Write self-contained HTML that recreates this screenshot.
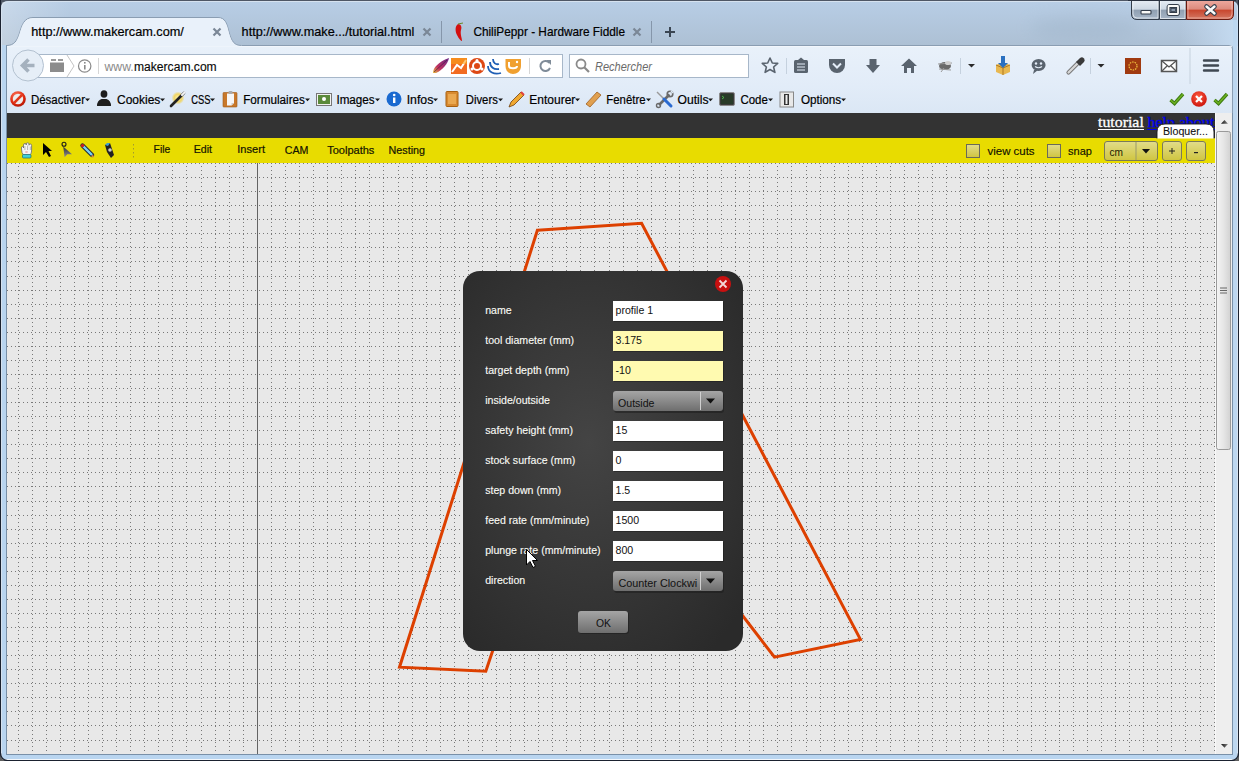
<!DOCTYPE html>
<html><head><meta charset="utf-8"><title>makercam</title>
<style>html,body{margin:0;padding:0;width:1239px;height:761px;overflow:hidden;background:#1b2230;font-family:"Liberation Sans",sans-serif} svg{display:block}</style>
</head><body><svg width="1239" height="761" viewBox="0 0 1239 761" shape-rendering="auto"><defs><linearGradient id="gTitle" gradientUnits="userSpaceOnUse" x1="0" y1="0" x2="0" y2="46">
<stop offset="0" stop-color="#b8cee6"/><stop offset="1" stop-color="#adc0d4"/></linearGradient><linearGradient id="gNav" x1="0" y1="0" x2="0" y2="1">
<stop offset="0" stop-color="#e9f1fa"/><stop offset="0.6" stop-color="#e2ecf8"/><stop offset="1" stop-color="#dbe7f5"/></linearGradient><radialGradient id="gDlg" cx="0.45" cy="0.45" r="0.7">
<stop offset="0" stop-color="#444"/><stop offset="1" stop-color="#2a2a2a"/></radialGradient><linearGradient id="gCombo" x1="0" y1="0" x2="0" y2="1">
<stop offset="0" stop-color="#a5a5a5"/><stop offset="0.5" stop-color="#8a8a8a"/><stop offset="1" stop-color="#6e6e6e"/></linearGradient><linearGradient id="gYBtn" x1="0" y1="0" x2="0" y2="1">
<stop offset="0" stop-color="#e2dc8a"/><stop offset="1" stop-color="#cfc540"/></linearGradient><linearGradient id="gScroll" x1="0" y1="0" x2="1" y2="0">
<stop offset="0" stop-color="#f4f4f4"/><stop offset="0.5" stop-color="#e6e6e6"/><stop offset="1" stop-color="#d2d2d2"/></linearGradient><linearGradient id="gGlassL" x1="0" y1="0" x2="1" y2="0"><stop offset="0" stop-color="#fff" stop-opacity="0.25"/><stop offset="1" stop-color="#fff" stop-opacity="0"/></linearGradient><linearGradient id="gGlassR" x1="0" y1="0" x2="1" y2="0"><stop offset="0" stop-color="#c6dcf2" stop-opacity="0"/><stop offset="1" stop-color="#c6dcf2" stop-opacity="0.95"/></linearGradient><filter id="blur8" x="-50%" y="-50%" width="200%" height="200%"><feGaussianBlur stdDeviation="8"/></filter><linearGradient id="gMin" x1="0" y1="0" x2="0" y2="1">
<stop offset="0" stop-color="#e6edf4"/><stop offset="0.48" stop-color="#cdd8e3"/><stop offset="0.5" stop-color="#8f9fb1"/><stop offset="1" stop-color="#a7b6c7"/></linearGradient><linearGradient id="gCls" x1="0" y1="0" x2="0" y2="1">
<stop offset="0" stop-color="#eeaaa0"/><stop offset="0.48" stop-color="#dc8a7c"/><stop offset="0.5" stop-color="#c8442c"/><stop offset="1" stop-color="#d47a66"/></linearGradient><linearGradient id="gFeather" x1="0" y1="1" x2="1" y2="0"><stop offset="0" stop-color="#e8c040"/><stop offset="0.35" stop-color="#c03060"/><stop offset="1" stop-color="#6a2a8a"/></linearGradient><radialGradient id="gStop" cx="0.4" cy="0.3" r="0.8"><stop offset="0" stop-color="#ff7a60"/><stop offset="0.6" stop-color="#e02a10"/><stop offset="1" stop-color="#a01000"/></radialGradient><radialGradient id="gSpark" cx="0.5" cy="0.5" r="0.5"><stop offset="0" stop-color="#fff8c0"/><stop offset="0.6" stop-color="#f4d040" stop-opacity="0.8"/><stop offset="1" stop-color="#f4d040" stop-opacity="0"/></radialGradient><radialGradient id="gRedX" cx="0.45" cy="0.35" r="0.7"><stop offset="0" stop-color="#ff5a40"/><stop offset="1" stop-color="#c81008"/></radialGradient><linearGradient id="gLasso" x1="0" y1="0" x2="0" y2="1"><stop offset="0" stop-color="#303030"/><stop offset="1" stop-color="#909090"/></linearGradient><linearGradient id="gArr" x1="0" y1="0" x2="1" y2="0"><stop offset="0" stop-color="#111"/><stop offset="1" stop-color="#888"/></linearGradient></defs><rect x="0" y="0" width="1239" height="761" fill="#4e5765"/><path d="M1 761 V8 Q1 1 8 1 H1231 Q1238 1 1238 8 V761 Z" fill="url(#gTitle)"/><path d="M1.5 761 V9 Q1.5 1.5 9 1.5 H1230 Q1237.5 1.5 1237.5 9 V761" fill="none" stroke="#d6e2ef" stroke-width="1"/><rect x="2" y="2" width="70" height="43" fill="url(#gGlassL)"/><rect x="1180" y="20" width="58" height="26" fill="url(#gGlassR)"/><rect x="2" y="45" width="4" height="710" fill="#b9d5f0"/><rect x="6" y="45" width="1" height="710" fill="#7990a8"/><rect x="1233" y="20" width="4" height="735" fill="#bdd7f0"/><rect x="1232" y="113" width="1" height="642" fill="#7990a8"/><rect x="2" y="755" width="1235" height="4" fill="#b9d5f0"/><rect x="6" y="754" width="1227" height="1" fill="#7990a8"/><rect x="1" y="759" width="1237" height="1" fill="#f2f6fb"/><rect x="0" y="760" width="1239" height="1" fill="#1b2230"/><rect x="0" y="0" width="1" height="761" fill="#1b2230"/><rect x="1238" y="0" width="1" height="761" fill="#1b2230"/><path d="M0 753 Q0.5 760.5 7 761 H0 Z" fill="#606060"/><path d="M0.5 753 Q1 760 7.5 760.5" fill="none" stroke="#1b2230" stroke-width="1.2"/><path d="M1239 753 Q1238.5 760.5 1232 761 H1239 Z" fill="#606060"/><path d="M1238.5 753 Q1238 760 1231.5 760.5" fill="none" stroke="#1b2230" stroke-width="1.2"/><ellipse cx="1085" cy="28" rx="55" ry="12" fill="#9aafc4" opacity="0.35" filter="url(#blur8)"/><path d="M1131.5 0 V14 Q1131.5 19.5 1137 19.5 H1159 V0 Z" fill="url(#gMin)" stroke="#333d4a" stroke-width="1"/><path d="M1159.5 0 V19.5 H1186 V0 Z" fill="url(#gMin)" stroke="#333d4a" stroke-width="1"/><path d="M1133 0 V14 Q1133 18 1137 18 H1158 V0" fill="none" stroke="#f4f7fa" stroke-width="1" opacity="0.7"/><rect x="1160.5" y="0.5" width="24.5" height="18" fill="none" stroke="#f4f7fa" stroke-width="1" opacity="0.7"/><path d="M1186.5 0 V19.5 H1228 Q1233.5 19.5 1233.5 14 V0 Z" fill="url(#gCls)" stroke="#6a1a10" stroke-width="1"/><path d="M1188 1 V18 H1228 Q1232 18 1232 14 V1" fill="none" stroke="#f6c8c0" stroke-width="1" opacity="0.6"/><rect x="1141" y="10.5" width="10" height="3.5" rx="0.8" fill="#f8f8f6" stroke="#333d4a" stroke-width="1.1"/><rect x="1168.5" y="6" width="9.5" height="8" rx="1" fill="#8a9aad" stroke="#333d4a" stroke-width="3.8"/><rect x="1168.5" y="6" width="9.5" height="8" rx="0.5" fill="none" stroke="#fafaf8" stroke-width="1.8"/><rect x="1171" y="8.5" width="4.5" height="3" fill="#8a9aad" stroke="#333d4a" stroke-width="0.8"/><path d="M1206.5 6.5 L1214.5 13.5 M1214.5 6.5 L1206.5 13.5" stroke="#333d4a" stroke-width="4.6" stroke-linecap="round"/><path d="M1206.5 6.5 L1214.5 13.5 M1214.5 6.5 L1206.5 13.5" stroke="#fafafa" stroke-width="2.4" stroke-linecap="round"/><rect x="1128" y="0" width="108" height="1" fill="#2a3240"/><path d="M6.5 45.5 C14 45.5 17 41 19.5 33 C22 25 24 17.5 33 17.5 L218 17.5 C225.5 17.5 227 24 229 32 C231.5 41 234 45.5 241.5 45.5 Z" fill="#e9f1fa"/><path d="M7 45 H1229 Q1232 45 1232 48 V113 H7 Z" fill="url(#gNav)"/><path d="M6.5 45.5 C14 45.5 17 41 19.5 33 C22 25 24 17.5 33 17.5 L218 17.5 C225.5 17.5 227 24 229 32 C231.5 41 234 45.5 241.5 45.5 H1229 Q1232.5 45.5 1232.5 49 V113" fill="none" stroke="#8a9db2" stroke-width="1"/><rect x="7" y="46" width="1225" height="1" fill="#f4f8fd" opacity="0.8"/><path d="M8 45.5 C14 45.5 17 41 19.5 33 C22 25 24 17.5 33 17.5 L218 17.5 C225.5 17.5 227 24 229 32 C231.5 41 234 45.5 240 45.5 Z" fill="#e9f1fa" transform="translate(0,1)"/><text x="31.3" y="36.2" font-family="Liberation Sans" font-size="12.2" fill="#000" textLength="152.6" lengthAdjust="spacingAndGlyphs"  stroke="#000" stroke-width="0.2">http://www.makercam.com/</text><text x="241.6" y="36.2" font-family="Liberation Sans" font-size="12.2" fill="#000" textLength="172.8" lengthAdjust="spacingAndGlyphs"  stroke="#000" stroke-width="0.2">http://www.make.../tutorial.html</text><text x="473.4" y="36.2" font-family="Liberation Sans" font-size="12.2" fill="#000" textLength="151.6" lengthAdjust="spacingAndGlyphs"  stroke="#000" stroke-width="0.2">ChiliPeppr - Hardware Fiddle</text><path d="M213.5 28.5 L220.5 35.5 M220.5 28.5 L213.5 35.5" stroke="#7a8796" stroke-width="2.2"/><path d="M423.5 28.5 L430.5 35.5 M430.5 28.5 L423.5 35.5" stroke="#7a8796" stroke-width="2.2"/><path d="M633.5 28.5 L640.5 35.5 M640.5 28.5 L633.5 35.5" stroke="#7a8796" stroke-width="2.2"/><rect x="441" y="21" width="1" height="22" fill="#8596aa"/><rect x="651" y="21" width="1" height="22" fill="#8596aa"/><path d="M665 32 H675 M670 27 V37" stroke="#3a4552" stroke-width="2"/><path d="M458 24 C455 26 455 31 457 35 C459 39 461 41 462 41 C462 38 460 34 461 30 C462 27 461 24 458 24 Z" fill="#d41010"/><path d="M458 24 L463 23" stroke="#6a8a2a" stroke-width="1"/><rect x="38.5" y="54.5" width="524" height="23" fill="#fff" stroke="#a7b7c9"/><circle cx="28" cy="65.5" r="15.5" fill="#e6eef7" stroke="#b3c1d0"/><path d="M23 65.5 H34.5 M28.5 59.5 L22.5 65.5 L28.5 71.5" stroke="#a5b1be" stroke-width="3.6" fill="none" stroke-linejoin="miter"/><rect x="50" y="62.5" width="14" height="9.5" fill="#8c8c8c"/><rect x="51" y="59" width="5" height="2" fill="#9a9a9a"/><rect x="58" y="59" width="5" height="2" fill="#9a9a9a"/><path d="M67 55 L74 66 L67 77" fill="none" stroke="#c4c4c4"/><circle cx="84.7" cy="66" r="6.2" fill="none" stroke="#8a8a8a" stroke-width="1.2"/><rect x="84" y="65" width="1.6" height="4.5" fill="#8a8a8a"/><rect x="84" y="62" width="1.6" height="1.6" fill="#8a8a8a"/><rect x="98" y="58" width="1" height="16" fill="#d6d6d6"/><text x="104.5" y="71" font-family="Liberation Sans" font-size="12.5" fill="#8a8a8a" textLength="29.2" lengthAdjust="spacingAndGlyphs" >www.</text><text x="134" y="71" font-family="Liberation Sans" font-size="12.5" fill="#0a0a0a" textLength="82.7" lengthAdjust="spacingAndGlyphs"  stroke="#0a0a0a" stroke-width="0.15">makercam.com</text><path d="M433 73 C433 68 438 62 449 58 C448 63 443 70 436 73 Z" fill="url(#gFeather)"/><path d="M434 72 L447 60" stroke="#3a1a3a" stroke-width="0.6"/><rect x="451" y="58" width="16" height="16" fill="#f26b21"/><path d="M452 72 L457 65 L461 68 L466 60" stroke="#fff" stroke-width="2" fill="none"/><rect x="451" y="58" width="16" height="6" fill="#f9a21b" opacity="0.6"/><circle cx="477" cy="66" r="8" fill="#dd4814"/><circle cx="477" cy="66" r="4" fill="none" stroke="#fff" stroke-width="2"/><circle cx="477" cy="60.5" r="1.5" fill="#fff"/><circle cx="472" cy="69" r="1.5" fill="#fff"/><circle cx="482" cy="69" r="1.5" fill="#fff"/><path d="M488 66 C488 72 494 75 501 73 M490 62 C490 67 494 70 499 69 M493 59 C493 63 496 65 499 64" stroke="#1f5fb5" stroke-width="1.8" fill="none"/><path d="M505.5 59 H521 V66 C521 71 517 74 513 74 C509 74 505.5 71 505.5 66 Z" fill="#f0a030"/><path d="M509 62 V66 C509 69 517 69 517 66" stroke="#fff" stroke-width="2" fill="none"/><circle cx="517" cy="62" r="1.2" fill="#fff"/><rect x="529" y="58" width="1" height="16" fill="#d6d6d6"/><path d="M549.5 63 A5 5 0 1 0 550 68" fill="none" stroke="#7f8b98" stroke-width="2"/><path d="M546 60 L551 60 L551 65 Z" fill="#7f8b98"/><rect x="569.5" y="54.5" width="179" height="23" fill="#fff" stroke="#a7b7c9"/><circle cx="581" cy="64" r="4.5" fill="none" stroke="#8a8a8a" stroke-width="1.8"/><path d="M584 67 L589 72" stroke="#8a8a8a" stroke-width="2.2"/><text x="595" y="71" font-family="Liberation Sans" font-size="12.5" fill="#6a6a6a" textLength="57" lengthAdjust="spacingAndGlyphs" font-style="italic">Rechercher</text><path d="M770 58 L772.3 63 L777.7 63.4 L773.6 67 L774.9 72.4 L770 69.5 L765.1 72.4 L766.4 67 L762.3 63.4 L767.7 63 Z" fill="none" stroke="#59636e" stroke-width="1.6" stroke-linejoin="round"/><rect x="786" y="58" width="1" height="16" fill="#c5d1de"/><rect x="794" y="60" width="14" height="13" rx="1.5" fill="#59636e"/><path d="M798 60 L801 57.5 L804 60 Z" fill="#59636e"/><path d="M797 64 H805 M797 67 H805 M797 70 H805" stroke="#e4edf8" stroke-width="1"/><path d="M829 59 H845 V65 A8 8 0 0 1 829 65 Z" fill="#59636e"/><path d="M833 63.5 L837 67.5 L841 63.5" stroke="#e4edf8" stroke-width="2" fill="none"/><path d="M869.5 59 H876.5 V65 H880 L873 73 L866 65 H869.5 Z" fill="#59636e"/><path d="M909 58.5 L917 66 H914 V73 H911 V68 H907 V73 H904 V66 H901 Z" fill="#59636e"/><ellipse cx="945" cy="66" rx="6" ry="4" fill="#6a6a6a"/><path d="M938 64 L952 63 M939 69 L951 70 M941 72 L944 68" stroke="#999" stroke-width="1"/><ellipse cx="948" cy="63" rx="3" ry="2" fill="#d0d0d0"/><rect x="960" y="58" width="1" height="16" fill="#c5d1de"/><path d="M968 64 H975 L971.5 67.5 Z" fill="#2a2a2a"/><path d="M996 65 L1003 62 L1010 65 L1010 72 L1003 75 L996 72 Z" fill="#e8b850"/><path d="M996 65 L1003 68 L1010 65 M1003 68 V75" stroke="#b07820" stroke-width="1" fill="none"/><path d="M1001 56 H1005 V63 H1008 L1003 68 L998 63 H1001 Z" fill="#2a70c0"/><ellipse cx="1038.6" cy="65" rx="7" ry="6" fill="#59636e"/><path d="M1034 70 L1033 74 L1038 70 Z" fill="#59636e"/><circle cx="1036" cy="63.5" r="1.2" fill="#e4edf8"/><circle cx="1041" cy="63.5" r="1.2" fill="#e4edf8"/><path d="M1035 66.5 Q1038.5 69 1042 66.5" stroke="#e4edf8" stroke-width="1.2" fill="none"/><path d="M1068.5 72.5 L1078 63" stroke="#777" stroke-width="4.2" stroke-linecap="round"/><path d="M1068.5 72.5 L1078 63" stroke="#d8d8d8" stroke-width="2.2" stroke-linecap="round"/><path d="M1076 62 L1080 58 Q1082 56.5 1083.5 58 L1084 58.5 Q1085.5 60 1084 62 L1080 66 Z" fill="#3a3a3a"/><rect x="1090" y="58" width="1" height="16" fill="#c5d1de"/><path d="M1097.5 64 H1104.5 L1101 67.5 Z" fill="#2a2a2a"/><rect x="1125" y="58" width="16" height="16" fill="#a03a10"/><circle cx="1133" cy="66" r="4" fill="none" stroke="#f0c040" stroke-width="1.2" stroke-dasharray="1.5 1"/><rect x="1161.5" y="60.5" width="15" height="11" fill="#fff" stroke="#555" stroke-width="1.5"/><path d="M1162 61 L1169 67 L1176 61 M1162 71 L1167 66 M1176 71 L1171 66" stroke="#555" stroke-width="1.3" fill="none"/><rect x="1189.5" y="48" width="1" height="36" fill="#c5d1de"/><path d="M1204 60.5 H1218 M1204 65.5 H1218 M1204 70.5 H1218" stroke="#3f4852" stroke-width="2.4" stroke-linecap="round"/><text x="31" y="103.8" font-family="Liberation Sans" font-size="12" fill="#000" textLength="54" lengthAdjust="spacingAndGlyphs"  stroke="#000" stroke-width="0.2">Désactiver</text><path d="M85 98.5 H90 L87.5 101.3 Z" fill="#1a1a1a"/><text x="117" y="103.8" font-family="Liberation Sans" font-size="12" fill="#000" textLength="43.3" lengthAdjust="spacingAndGlyphs"  stroke="#000" stroke-width="0.2">Cookies</text><path d="M160 98.5 H165 L162.5 101.3 Z" fill="#1a1a1a"/><text x="191.2" y="103.8" font-family="Liberation Sans" font-size="12" fill="#000" textLength="19.3" lengthAdjust="spacingAndGlyphs"  stroke="#000" stroke-width="0.2">CSS</text><path d="M210 98.5 H215 L212.5 101.3 Z" fill="#1a1a1a"/><text x="243.2" y="103.8" font-family="Liberation Sans" font-size="12" fill="#000" textLength="61.8" lengthAdjust="spacingAndGlyphs"  stroke="#000" stroke-width="0.2">Formulaires</text><path d="M305 98.5 H310 L307.5 101.3 Z" fill="#1a1a1a"/><text x="336.4" y="103.8" font-family="Liberation Sans" font-size="12" fill="#000" textLength="38.3" lengthAdjust="spacingAndGlyphs"  stroke="#000" stroke-width="0.2">Images</text><path d="M375 98.5 H380 L377.5 101.3 Z" fill="#1a1a1a"/><text x="406.7" y="103.8" font-family="Liberation Sans" font-size="12" fill="#000" textLength="26.6" lengthAdjust="spacingAndGlyphs"  stroke="#000" stroke-width="0.2">Infos</text><path d="M433 98.5 H438 L435.5 101.3 Z" fill="#1a1a1a"/><text x="465.8" y="103.8" font-family="Liberation Sans" font-size="12" fill="#000" textLength="32" lengthAdjust="spacingAndGlyphs"  stroke="#000" stroke-width="0.2">Divers</text><path d="M498 98.5 H503 L500.5 101.3 Z" fill="#1a1a1a"/><text x="529.3" y="103.8" font-family="Liberation Sans" font-size="12" fill="#000" textLength="46" lengthAdjust="spacingAndGlyphs"  stroke="#000" stroke-width="0.2">Entourer</text><path d="M575 98.5 H580 L577.5 101.3 Z" fill="#1a1a1a"/><text x="606.3" y="103.8" font-family="Liberation Sans" font-size="12" fill="#000" textLength="39.2" lengthAdjust="spacingAndGlyphs"  stroke="#000" stroke-width="0.2">Fenêtre</text><path d="M646 98.5 H651 L648.5 101.3 Z" fill="#1a1a1a"/><text x="677.5" y="103.8" font-family="Liberation Sans" font-size="12" fill="#000" textLength="31" lengthAdjust="spacingAndGlyphs"  stroke="#000" stroke-width="0.2">Outils</text><path d="M708 98.5 H713 L710.5 101.3 Z" fill="#1a1a1a"/><text x="740.4" y="103.8" font-family="Liberation Sans" font-size="12" fill="#000" textLength="27.4" lengthAdjust="spacingAndGlyphs"  stroke="#000" stroke-width="0.2">Code</text><path d="M768 98.5 H773 L770.5 101.3 Z" fill="#1a1a1a"/><text x="800.9" y="103.8" font-family="Liberation Sans" font-size="12" fill="#000" textLength="40.3" lengthAdjust="spacingAndGlyphs"  stroke="#000" stroke-width="0.2">Options</text><path d="M841 98.5 H846 L843.5 101.3 Z" fill="#1a1a1a"/><circle cx="18" cy="99" r="7.8" fill="url(#gStop)"/><circle cx="18" cy="99" r="5.2" fill="#ededed"/><path d="M14.2 102.8 L21.8 95.2" stroke="#e0361a" stroke-width="2.6"/><ellipse cx="104" cy="94" rx="3.4" ry="3.8" fill="#1e1e1e"/><path d="M97 106 Q97 100.5 101.5 99 H106.5 Q111 100.5 111 106 Z" fill="#1e1e1e"/><circle cx="178" cy="98" r="6.5" fill="url(#gSpark)"/><path d="M171 106 L184 93" stroke="#222" stroke-width="2.6" stroke-linecap="round"/><path d="M182 95 L184.5 92.5" stroke="#f4f4f4" stroke-width="2.2" stroke-linecap="round"/><rect x="223" y="92.5" width="14" height="14.5" rx="0.8" fill="#c8782a" stroke="#a05a18" stroke-width="0.6"/><path d="M227 93.5 H234 V103 L231.5 105.5 H227 Z" fill="#f6f6f6"/><path d="M231.5 105.5 V103 H234 Z" fill="#ccc"/><rect x="228.5" y="91" width="4" height="3" rx="1" fill="#aaa"/><rect x="316.5" y="93.5" width="15" height="12" fill="#f2f2f2" stroke="#777"/><rect x="318" y="95" width="12" height="9" fill="#5a8a3a"/><circle cx="324" cy="99" r="2" fill="#fff"/><circle cx="394" cy="99" r="7.5" fill="#1a6ad0"/><rect x="393" y="97.5" width="2.4" height="5.5" fill="#fff"/><circle cx="394.2" cy="95" r="1.3" fill="#fff"/><rect x="446" y="91.5" width="12" height="15" rx="1" fill="#d88a30" stroke="#a86010"/><rect x="448" y="94" width="8" height="10" fill="#eaa850"/><path d="M509 107 L511 102 L521 92 L524 95 L514 105 Z" fill="#f0a830" stroke="#704010" stroke-width="0.8"/><path d="M521 92 L524 95" stroke="#e04040" stroke-width="2"/><path d="M586 104 L597 92 L601 95 L590 107 Z" fill="#e0a050" stroke="#a06020" stroke-width="0.8"/><path d="M669.5 94.5 L659 105" stroke="#6a6a6a" stroke-width="2.6"/><circle cx="670" cy="94" r="2.8" fill="none" stroke="#6a6a6a" stroke-width="1.6"/><circle cx="658.5" cy="105.5" r="2" fill="none" stroke="#6a6a6a" stroke-width="1.4"/><path d="M671 91 L673 93" stroke="#dde8f4" stroke-width="1.6"/><path d="M657 92 L664 99" stroke="#9a9a9a" stroke-width="1.4"/><path d="M664 99 L671 106" stroke="#2a6ad0" stroke-width="3" stroke-linecap="round"/><rect x="719.5" y="92.5" width="15" height="13" rx="1.5" fill="#3a3a3a" stroke="#8a8a8a"/><rect x="721" y="94" width="12" height="10" fill="#283a28"/><path d="M722 96 L724 97.5 L722 99" stroke="#5c5" stroke-width="0.8" fill="none"/><rect x="780" y="92" width="13.5" height="15" fill="#e8e8e8" stroke="#888"/><rect x="784" y="94" width="5" height="11" fill="#333"/><rect x="785.5" y="95" width="2" height="9" fill="#eee"/><path d="M1170.5 100 L1174.5 103.5 L1183 94" stroke="#3c7a10" stroke-width="3.4" fill="none"/><path d="M1170.5 100 L1174.5 103.5 L1183 94" stroke="#6cb020" stroke-width="1.6" fill="none"/><circle cx="1199" cy="99" r="7.8" fill="url(#gRedX)"/><path d="M1196 96 L1202 102 M1202 96 L1196 102" stroke="#fff" stroke-width="2.2"/><path d="M1214.5 100 L1218.5 103.5 L1227 94" stroke="#3c7a10" stroke-width="3.4" fill="none"/><path d="M1214.5 100 L1218.5 103.5 L1227 94" stroke="#6cb020" stroke-width="1.6" fill="none"/><rect x="7" y="113" width="1208" height="25" fill="#333"/><rect x="7" y="138" width="1208" height="25" fill="#e8dc00"/><rect x="7" y="163" width="1208" height="591" fill="#e8e8e8"/><path d="M7 163.5 H1215 M7 177.5 H1215 M7 191.5 H1215 M7 205.5 H1215 M7 219.5 H1215 M7 233.5 H1215 M7 247.5 H1215 M7 261.5 H1215 M7 276.5 H1215 M7 290.5 H1215 M7 304.5 H1215 M7 318.5 H1215 M7 332.5 H1215 M7 346.5 H1215 M7 360.5 H1215 M7 374.5 H1215 M7 388.5 H1215 M7 402.5 H1215 M7 416.5 H1215 M7 430.5 H1215 M7 444.5 H1215 M7 458.5 H1215 M7 472.5 H1215 M7 486.5 H1215 M7 501.5 H1215 M7 515.5 H1215 M7 529.5 H1215 M7 543.5 H1215 M7 557.5 H1215 M7 571.5 H1215 M7 585.5 H1215 M7 599.5 H1215 M7 613.5 H1215 M7 627.5 H1215 M7 641.5 H1215 M7 655.5 H1215 M7 669.5 H1215 M7 683.5 H1215 M7 697.5 H1215 M7 711.5 H1215 M7 725.5 H1215 M7 740.5 H1215" stroke="#787878" stroke-width="1" stroke-dasharray="1 3" shape-rendering="crispEdges"/><path d="M18.5 166 V754 M32.5 166 V754 M46.5 166 V754 M60.5 166 V754 M74.5 166 V754 M88.5 166 V754 M102.5 166 V754 M116.5 166 V754 M130.5 166 V754 M144.5 166 V754 M158.5 166 V754 M172.5 166 V754 M186.5 166 V754 M201.5 166 V754 M215.5 166 V754 M229.5 166 V754 M243.5 166 V754 M257.5 166 V754 M271.5 166 V754 M285.5 166 V754 M299.5 166 V754 M313.5 166 V754 M327.5 166 V754 M341.5 166 V754 M355.5 166 V754 M369.5 166 V754 M383.5 166 V754 M398.5 166 V754 M412.5 166 V754 M426.5 166 V754 M440.5 166 V754 M454.5 166 V754 M468.5 166 V754 M482.5 166 V754 M496.5 166 V754 M510.5 166 V754 M524.5 166 V754 M538.5 166 V754 M552.5 166 V754 M566.5 166 V754 M580.5 166 V754 M594.5 166 V754 M609.5 166 V754 M623.5 166 V754 M637.5 166 V754 M651.5 166 V754 M665.5 166 V754 M679.5 166 V754 M693.5 166 V754 M707.5 166 V754 M721.5 166 V754 M735.5 166 V754 M749.5 166 V754 M763.5 166 V754 M777.5 166 V754 M791.5 166 V754 M806.5 166 V754 M820.5 166 V754 M834.5 166 V754 M848.5 166 V754 M862.5 166 V754 M876.5 166 V754 M890.5 166 V754 M904.5 166 V754 M918.5 166 V754 M932.5 166 V754 M946.5 166 V754 M960.5 166 V754 M974.5 166 V754 M988.5 166 V754 M1003.5 166 V754 M1017.5 166 V754 M1031.5 166 V754 M1045.5 166 V754 M1059.5 166 V754 M1073.5 166 V754 M1087.5 166 V754 M1101.5 166 V754 M1115.5 166 V754 M1129.5 166 V754 M1143.5 166 V754 M1157.5 166 V754 M1171.5 166 V754 M1185.5 166 V754 M1200.5 166 V754 M1214.5 166 V754" stroke="#787878" stroke-width="1" stroke-dasharray="1 3" shape-rendering="crispEdges"/><rect x="257" y="163" width="1" height="591" fill="#646464"/><path d="M537.4 230.2 L641.6 223.2 L860.4 639.4 L774.5 657.2 L577 400 L485.8 671.3 L399.5 667.2 Z" fill="none" stroke="#dd4000" stroke-width="3" stroke-linejoin="miter"/><text x="1098" y="126.7" font-family="Liberation Serif" font-size="15.5" fill="#fff" textLength="45.8" lengthAdjust="spacingAndGlyphs"  stroke="#fff" stroke-width="0.3">tutorial</text><rect x="1098" y="129" width="46" height="1" fill="#fff"/><text x="1147.4" y="126.7" font-family="Liberation Serif" font-size="15.5" fill="#0000f0" textLength="67.1" lengthAdjust="spacingAndGlyphs"  stroke="#0000f0" stroke-width="0.3">help about</text><rect x="1147" y="129" width="68" height="1" fill="#0000ee"/><path d="M1157 138.5 V132 Q1157 124 1165 124 H1206 Q1214 124 1214 132 V138.5" fill="#fff" stroke="#1a1a1a" stroke-width="0.9"/><text x="1163" y="134.8" font-family="Liberation Sans" font-size="11.8" fill="#111" textLength="45" lengthAdjust="spacingAndGlyphs"  stroke="#111" stroke-width="0.1">Bloquer...</text><path d="M21.5 149 Q21 146.5 22.5 146.5 Q23.5 146.5 23.5 148 V145 Q23.5 143.5 25 143.5 Q26.3 143.5 26.3 145 V144 Q26.3 142.8 27.6 142.8 Q29 142.8 29 144 V145.2 Q29 144 30.3 144 Q31.6 144 31.6 145.5 V151 Q31.6 154.5 29.5 155 H23.5 Q21.5 153 21.5 149 Z" fill="#f4f4f4" stroke="#6a6a6a" stroke-width="0.8"/><path d="M24.9 146 V150 M27.6 145.5 V150 M30.3 146.5 V150" stroke="#9a9a9a" stroke-width="0.7"/><ellipse cx="26.5" cy="152" rx="1.5" ry="0.8" fill="#e8a0a0"/><rect x="22.5" y="154.5" width="8.5" height="3.5" rx="1" fill="#40d0d8" stroke="#1a6a78" stroke-width="0.7"/><path d="M43 143 L43 155 L46 152 L49 157 L51 156 L48.5 151 L52 151 Z" fill="#000"/><circle cx="64" cy="144.3" r="2" fill="none" stroke="#1a1a1a" stroke-width="1.1"/><path d="M63.2 146.5 L72 154.3 L67.3 154.3 L64.6 157.2 Z" fill="url(#gLasso)"/><path d="M82.5 145.5 L92 155" stroke="#1a2a3a" stroke-width="4.4" stroke-linecap="round"/><path d="M82.5 145.5 L92 155" stroke="#7ad0f4" stroke-width="2.4"/><circle cx="82.6" cy="145.6" r="1.7" fill="#d02020"/><path d="M91 156.5 L94 157.5 L93 154.5 Z" fill="#e89040"/><path d="M105 145 L110 143 L114 155 L111 158 L107 152 Z" fill="#222"/><circle cx="110" cy="150" r="1.8" fill="#ccc"/><path d="M105 145 L107 143 L110 143 L108 146 Z" fill="#40a0d0"/><rect x="133" y="144" width="1" height="1.5" fill="#a09a30"/><rect x="133" y="148" width="1" height="1.5" fill="#a09a30"/><rect x="133" y="152" width="1" height="1.5" fill="#a09a30"/><rect x="133" y="156" width="1" height="1.5" fill="#a09a30"/><text x="153.6" y="153" font-family="Liberation Sans" font-size="10.8" fill="#141400" textLength="16.6" lengthAdjust="spacingAndGlyphs"  stroke="#141400" stroke-width="0.2">File</text><text x="193.8" y="153" font-family="Liberation Sans" font-size="10.8" fill="#141400" textLength="18.2" lengthAdjust="spacingAndGlyphs"  stroke="#141400" stroke-width="0.2">Edit</text><text x="237.3" y="153" font-family="Liberation Sans" font-size="10.8" fill="#141400" textLength="27.7" lengthAdjust="spacingAndGlyphs"  stroke="#141400" stroke-width="0.2">Insert</text><text x="284.8" y="154" font-family="Liberation Sans" font-size="10.8" fill="#141400" textLength="23.7" lengthAdjust="spacingAndGlyphs"  stroke="#141400" stroke-width="0.2">CAM</text><text x="327.2" y="154" font-family="Liberation Sans" font-size="10.8" fill="#141400" textLength="47.2" lengthAdjust="spacingAndGlyphs"  stroke="#141400" stroke-width="0.2">Toolpaths</text><text x="388.6" y="154" font-family="Liberation Sans" font-size="10.8" fill="#141400" textLength="36.4" lengthAdjust="spacingAndGlyphs"  stroke="#141400" stroke-width="0.2">Nesting</text><rect x="966.5" y="144.5" width="13" height="13" fill="url(#gYBtn)" stroke="#6a6a58"/><text x="987.5" y="154.8" font-family="Liberation Sans" font-size="11.8" fill="#111100" textLength="47.1" lengthAdjust="spacingAndGlyphs"  stroke="#111100" stroke-width="0.15">view cuts</text><rect x="1047.5" y="144.5" width="13" height="13" fill="url(#gYBtn)" stroke="#6a6a58"/><text x="1068" y="154.8" font-family="Liberation Sans" font-size="11.8" fill="#111100" textLength="23.9" lengthAdjust="spacingAndGlyphs"  stroke="#111100" stroke-width="0.15">snap</text><rect x="1104.5" y="141.5" width="53" height="19" rx="2.5" fill="url(#gYBtn)" stroke="#7a7a5a"/><rect x="1135.5" y="142" width="1" height="18" fill="#9a9a6a"/><text x="1109.5" y="156" font-family="Liberation Sans" font-size="11" fill="#1a1a00" textLength="13.5" lengthAdjust="spacingAndGlyphs" >cm</text><path d="M1142 149 H1150 L1146 153.5 Z" fill="#111"/><rect x="1162.5" y="141.5" width="19" height="19" rx="2.5" fill="url(#gYBtn)" stroke="#7a7a5a"/><path d="M1169 151 H1175 M1172 148 V154" stroke="#222" stroke-width="1"/><rect x="1186.5" y="141.5" width="19" height="19" rx="2.5" fill="url(#gYBtn)" stroke="#7a7a5a"/><rect x="1194" y="152" width="4" height="1.2" fill="#222"/><rect x="1215" y="113" width="17" height="641" fill="#eeeeee"/><rect x="1215" y="113" width="1" height="641" fill="#f8f8f8"/><path d="M1221 123.8 L1224.5 120 L1228 123.8 Z" fill="url(#gArr)"/><path d="M1221 744 L1224.5 747.8 L1228 744 Z" fill="url(#gArr)"/><rect x="1216.5" y="131.5" width="14" height="318" rx="2" fill="url(#gScroll)" stroke="#9a9a9a"/><path d="M1220 288 H1227 M1220 290.5 H1227 M1220 293 H1227" stroke="#666" stroke-width="1"/><rect x="463" y="271" width="280" height="380" rx="17" fill="url(#gDlg)"/><circle cx="723" cy="284" r="8" fill="#c81010"/><path d="M719.5 280.5 L726.5 287.5 M726.5 280.5 L719.5 287.5" stroke="#f4d8d8" stroke-width="1.8"/><text x="485.2" y="313.8" font-family="Liberation Sans" font-size="10.6" fill="#fafaf5"  stroke="#fafaf5" stroke-width="0.12">name</text><rect x="614" y="302" width="110" height="20" fill="#1a1a1a" opacity="0.5"/><rect x="613" y="301" width="110" height="20" fill="#fff"/><text x="615.5" y="313.8" font-family="Liberation Sans" font-size="10.6" fill="#111" >profile 1</text><text x="485.2" y="343.8" font-family="Liberation Sans" font-size="10.6" fill="#fafaf5"  stroke="#fafaf5" stroke-width="0.12">tool diameter (mm)</text><rect x="614" y="332" width="110" height="20" fill="#1a1a1a" opacity="0.5"/><rect x="613" y="331" width="110" height="20" fill="#fffab0"/><text x="615.5" y="343.8" font-family="Liberation Sans" font-size="10.6" fill="#111" >3.175</text><text x="485.2" y="373.8" font-family="Liberation Sans" font-size="10.6" fill="#fafaf5"  stroke="#fafaf5" stroke-width="0.12">target depth (mm)</text><rect x="614" y="362" width="110" height="20" fill="#1a1a1a" opacity="0.5"/><rect x="613" y="361" width="110" height="20" fill="#fffab0"/><text x="615.5" y="373.8" font-family="Liberation Sans" font-size="10.6" fill="#111" >-10</text><text x="485.2" y="403.8" font-family="Liberation Sans" font-size="10.6" fill="#fafaf5"  stroke="#fafaf5" stroke-width="0.12">inside/outside</text><text x="485.2" y="433.8" font-family="Liberation Sans" font-size="10.6" fill="#fafaf5"  stroke="#fafaf5" stroke-width="0.12">safety height (mm)</text><rect x="614" y="422" width="110" height="20" fill="#1a1a1a" opacity="0.5"/><rect x="613" y="421" width="110" height="20" fill="#fff"/><text x="615.5" y="433.8" font-family="Liberation Sans" font-size="10.6" fill="#111" >15</text><text x="485.2" y="463.8" font-family="Liberation Sans" font-size="10.6" fill="#fafaf5"  stroke="#fafaf5" stroke-width="0.12">stock surface (mm)</text><rect x="614" y="452" width="110" height="20" fill="#1a1a1a" opacity="0.5"/><rect x="613" y="451" width="110" height="20" fill="#fff"/><text x="615.5" y="463.8" font-family="Liberation Sans" font-size="10.6" fill="#111" >0</text><text x="485.2" y="493.8" font-family="Liberation Sans" font-size="10.6" fill="#fafaf5"  stroke="#fafaf5" stroke-width="0.12">step down (mm)</text><rect x="614" y="482" width="110" height="20" fill="#1a1a1a" opacity="0.5"/><rect x="613" y="481" width="110" height="20" fill="#fff"/><text x="615.5" y="493.8" font-family="Liberation Sans" font-size="10.6" fill="#111" >1.5</text><text x="485.2" y="523.8" font-family="Liberation Sans" font-size="10.6" fill="#fafaf5"  stroke="#fafaf5" stroke-width="0.12">feed rate (mm/minute)</text><rect x="614" y="512" width="110" height="20" fill="#1a1a1a" opacity="0.5"/><rect x="613" y="511" width="110" height="20" fill="#fff"/><text x="615.5" y="523.8" font-family="Liberation Sans" font-size="10.6" fill="#111" >1500</text><text x="485.2" y="553.8" font-family="Liberation Sans" font-size="10.6" fill="#fafaf5"  stroke="#fafaf5" stroke-width="0.12">plunge rate (mm/minute)</text><rect x="614" y="542" width="110" height="20" fill="#1a1a1a" opacity="0.5"/><rect x="613" y="541" width="110" height="20" fill="#fff"/><text x="615.5" y="553.8" font-family="Liberation Sans" font-size="10.6" fill="#111" >800</text><text x="485.2" y="583.8" font-family="Liberation Sans" font-size="10.6" fill="#fafaf5"  stroke="#fafaf5" stroke-width="0.12">direction</text><rect x="614" y="393" width="110" height="20" rx="3" fill="#1a1a1a" opacity="0.5"/><rect x="613" y="391" width="110" height="20" rx="3" fill="url(#gCombo)"/><rect x="700" y="392" width="1" height="18" fill="#d0d0d0"/><text x="618" y="406.5" font-family="Liberation Sans" font-size="10.6" fill="#111" >Outside</text><path d="M706 398.5 H715 L710.5 403.5 Z" fill="#111"/><rect x="614" y="573" width="110" height="20" rx="3" fill="#1a1a1a" opacity="0.5"/><rect x="613" y="571" width="110" height="20" rx="3" fill="url(#gCombo)"/><rect x="700" y="572" width="1" height="18" fill="#d0d0d0"/><text x="618.4" y="586.5" font-family="Liberation Sans" font-size="10.6" fill="#111" textLength="78.8" lengthAdjust="spacingAndGlyphs" >Counter Clockwi</text><path d="M706 578.5 H715 L710.5 583.5 Z" fill="#111"/><rect x="579" y="612" width="50" height="22" rx="3" fill="#1a1a1a" opacity="0.5"/><rect x="578" y="611" width="50" height="22" rx="3" fill="url(#gCombo)"/><text x="596" y="626.5" font-family="Liberation Sans" font-size="10.6" fill="#111" textLength="15" lengthAdjust="spacingAndGlyphs" >OK</text><path d="M526.5 549.5 V565 L530 561.5 L533 567.5 L535.5 566.3 L532.5 560.5 L537.5 560.5 Z" fill="#fff" stroke="#000" stroke-width="1"/></svg></body></html>
